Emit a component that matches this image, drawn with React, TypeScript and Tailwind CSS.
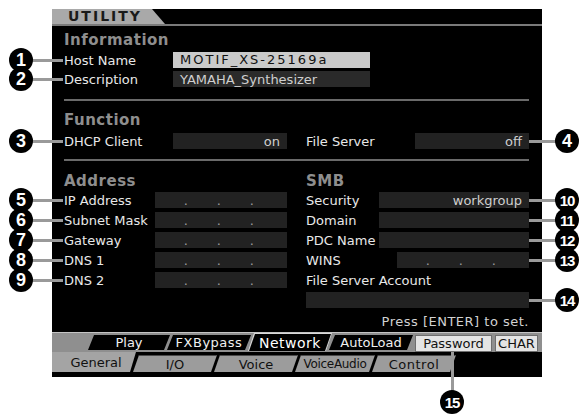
import React from "react";

type CalloutProps = { num: string; circle: string; line: string };

const Callout: React.FC<CalloutProps> = ({ num, circle, line }) => (
  <>
    <div className={`absolute bg-[#9a9a9a] ${line}`} />
    <div
      className={`absolute w-[24px] h-[24px] rounded-full bg-black text-white flex items-center justify-center font-['Liberation_Sans',sans-serif] font-bold leading-none ${
        num.length > 1 ? "text-[15px] tracking-[-1px]" : "text-[18px]"
      } ${circle}`}
    >
      {num}
    </div>
  </>
);

const Heading: React.FC<{ children: React.ReactNode }> = ({ children }) => (
  <div className="h-[18px] leading-[18px] text-[15px] font-bold tracking-[0.5px] text-[#8e8e8e]">{children}</div>
);

const Label: React.FC<{ w: string; children: React.ReactNode }> = ({ w, children }) => (
  <div className={`${w} shrink-0 text-[13px] leading-none text-[#e8e8e8]`}>{children}</div>
);

const ValueBox: React.FC<{ w: string; children?: React.ReactNode }> = ({ w, children }) => (
  <div className={`${w} h-full bg-[#222222] flex items-center justify-end pr-[7px] text-[13px] leading-none text-[#cfcfcf]`}>
    {children}
  </div>
);

const IpBox: React.FC<{ w: string }> = ({ w }) => (
  <div className={`${w} h-full bg-[#222222] grid grid-cols-4`}>
    {[0, 1, 2].map((i) => (
      <div key={i} className="flex items-center justify-end text-[13px] leading-none text-[#9c9c9c]">
        .
      </div>
    ))}
    <div />
  </div>
);

const Row: React.FC<{ children: React.ReactNode }> = ({ children }) => (
  <div className="h-[16px] flex items-center">{children}</div>
);

const App: React.FC = () => {
  return (
    <div className="relative w-[584px] h-[415px] bg-white overflow-hidden font-['DejaVu_Sans',sans-serif]">
      {/* LCD screen */}
      <div className="ml-[52px] mt-[9px] w-[490px] h-[368px] bg-black flex flex-col">
        <div className="h-[15px] flex">
          <div className="w-[113px] h-full bg-[#a9a9a9] [clip-path:polygon(0_0,100px_0,113px_100%,0_100%)] pl-[16px] text-[14px] leading-[15px] font-bold tracking-[2px] text-[#1a1a1a]">
            UTILITY
          </div>
        </div>
        <div className="h-[2px] bg-[#7a7a7a]" />

        <div className="pl-[12px] pr-[13px]">
          <div className="mt-[5px]">
            <Heading>Information</Heading>
          </div>
          <div className="mt-[3px]">
            <Row>
              <Label w="w-[109px]">Host Name</Label>
              <div className="w-[197px] h-full bg-[#cacaca] flex items-center pl-[7px] pb-[1px] text-[13px] leading-[15px] tracking-[2px] text-[#111111]">
                MOTIF_XS-25169a
              </div>
            </Row>
          </div>
          <div className="mt-[3px]">
            <Row>
              <Label w="w-[109px]">Description</Label>
              <div className="w-[197px] h-full bg-[#2a2a2a] flex items-center pl-[7px] text-[13px] leading-none text-[#cfcfcf]">
                YAMAHA_Synthesizer
              </div>
            </Row>
          </div>

          <div className="mt-[12px] h-[2px] bg-[#6a6a6a]" />

          <div className="mt-[10px]">
            <Heading>Function</Heading>
          </div>
          <div className="mt-[4px] grid grid-cols-[223px_223px] gap-x-[19px]">
            <Row>
              <Label w="w-[109px]">DHCP Client</Label>
              <ValueBox w="w-[114px]">on</ValueBox>
            </Row>
            <Row>
              <Label w="w-[109px]">File Server</Label>
              <ValueBox w="w-[114px]">off</ValueBox>
            </Row>
          </div>

          <div className="mt-[10px] h-[2px] bg-[#6a6a6a]" />

          <div className="mt-[11px] grid grid-cols-[223px_223px] gap-x-[19px]">
            <div className="flex flex-col">
              <Heading>Address</Heading>
              <div className="mt-[2px] flex flex-col gap-[4px]">
                {["IP Address", "Subnet Mask", "Gateway", "DNS 1", "DNS 2"].map((name) => (
                  <Row key={name}>
                    <Label w="w-[91px]">{name}</Label>
                    <IpBox w="w-[132px]" />
                  </Row>
                ))}
              </div>
            </div>
            <div className="flex flex-col">
              <Heading>SMB</Heading>
              <div className="mt-[2px] flex flex-col gap-[4px]">
                <Row>
                  <Label w="w-[73px]">Security</Label>
                  <ValueBox w="w-[150px]">workgroup</ValueBox>
                </Row>
                <Row>
                  <Label w="w-[73px]">Domain</Label>
                  <ValueBox w="w-[150px]" />
                </Row>
                <Row>
                  <Label w="w-[73px]">PDC Name</Label>
                  <ValueBox w="w-[150px]" />
                </Row>
                <Row>
                  <Label w="w-[91px]">WINS</Label>
                  <IpBox w="w-[132px]" />
                </Row>
                <Row>
                  <Label w="w-full">File Server Account</Label>
                </Row>
                <div className="h-[16px] bg-[#222222]" />
              </div>
            </div>
          </div>

          <div className="mt-[6px] h-[16px] text-right text-[13px] leading-[16px] tracking-[0.5px] text-[#d2d2d2]">
            Press [ENTER] to set.
          </div>
        </div>

        {/* tabs */}
        <div className="mt-auto mb-[5px] h-[40px] flex flex-col">
          <div className="h-[20px] bg-[#8f8f8f] border-t border-[#c4c4c4] flex items-end">
            <div className="w-[36px] shrink-0" />
            <div className="w-[82px] h-[15px] mb-[2px] bg-black [clip-path:polygon(6px_0,100%_0,calc(100%-6px)_100%,0_100%)] flex items-center justify-center text-[13px] leading-none text-[#f0f0f0]">
              Play
            </div>
            <div className="-ml-[3px] w-[84px] h-[15px] mb-[2px] bg-black [clip-path:polygon(6px_0,100%_0,calc(100%-6px)_100%,0_100%)] flex items-center justify-center text-[13px] leading-none tracking-[0.5px] text-[#f0f0f0]">
              FXBypass
            </div>
            <div className="-ml-[3px] w-[84px] h-[18px] mb-[1px] bg-[#d8d8d8] [clip-path:polygon(6px_0,100%_0,calc(100%-6px)_100%,0_100%)] pt-[1px] pl-[1px] pr-[1px]">
              <div className="w-full h-full bg-black [clip-path:polygon(6px_0,100%_0,calc(100%-6px)_100%,0_100%)] flex items-center justify-center text-[14px] leading-none tracking-[0.5px] text-white">
                Network
              </div>
            </div>
            <div className="-ml-[3px] w-[84px] h-[15px] mb-[2px] bg-black [clip-path:polygon(6px_0,100%_0,calc(100%-6px)_100%,0_100%)] flex items-center justify-center text-[13px] leading-none text-[#f0f0f0]">
              AutoLoad
            </div>
            <div className="ml-[2px] w-[77px] h-[17px] bg-[#e4e4e4] border border-[#6e6e6e] flex items-center justify-center text-[13px] leading-none text-[#111111]">
              Password
            </div>
            <div className="ml-[3px] w-[43px] h-[17px] bg-[#e4e4e4] border border-[#6e6e6e] flex items-center justify-center text-[13px] leading-none text-[#111111]">
              CHAR
            </div>
          </div>
          <div className="h-[20px] bg-black flex items-start">
            <div className="w-[84px] h-[20px] bg-[#a4a4a4] [clip-path:polygon(0_0,100%_0,calc(100%-6px)_100%,0_100%)] flex items-center justify-center pl-[4px] text-[13px] leading-none text-[#111111]">
              General
            </div>
            <div className="-ml-[3px] mt-[3px] w-[84px] h-[17px] bg-[#9c9c9c] border-t border-[#4a4a4a] [clip-path:polygon(6px_0,100%_0,calc(100%-6px)_100%,0_100%)] flex items-center justify-center text-[13px] leading-none text-[#111111]">
              I/O
            </div>
            <div className="-ml-[3px] mt-[3px] w-[84px] h-[17px] bg-[#9c9c9c] border-t border-[#4a4a4a] [clip-path:polygon(6px_0,100%_0,calc(100%-6px)_100%,0_100%)] flex items-center justify-center text-[13px] leading-none text-[#111111]">
              Voice
            </div>
            <div className="-ml-[3px] mt-[3px] w-[80px] h-[17px] bg-[#9c9c9c] border-t border-[#4a4a4a] [clip-path:polygon(6px_0,100%_0,calc(100%-6px)_100%,0_100%)] flex items-center justify-center text-[12px] leading-none tracking-[-0.3px] text-[#111111]">
              VoiceAudio
            </div>
            <div className="-ml-[3px] mt-[3px] w-[84px] h-[17px] bg-[#9c9c9c] border-t border-[#4a4a4a] [clip-path:polygon(6px_0,100%_0,calc(100%-6px)_100%,0_100%)] flex items-center justify-center text-[13px] leading-none tracking-[0.5px] text-[#111111]">
              Control
            </div>
          </div>
        </div>
      </div>

      {/* callouts */}
      <Callout num="1" circle="left-[9px] top-[48px]" line="left-[32px] top-[59px] w-[31px] h-[3px]" />
      <Callout num="2" circle="left-[9px] top-[67px]" line="left-[32px] top-[78px] w-[31px] h-[3px]" />
      <Callout num="3" circle="left-[9px] top-[129px]" line="left-[32px] top-[140px] w-[31px] h-[3px]" />
      <Callout num="5" circle="left-[9px] top-[188px]" line="left-[32px] top-[199px] w-[31px] h-[3px]" />
      <Callout num="6" circle="left-[9px] top-[208px]" line="left-[32px] top-[219px] w-[31px] h-[3px]" />
      <Callout num="7" circle="left-[9px] top-[228px]" line="left-[32px] top-[239px] w-[31px] h-[3px]" />
      <Callout num="8" circle="left-[9px] top-[248px]" line="left-[32px] top-[259px] w-[31px] h-[3px]" />
      <Callout num="9" circle="left-[9px] top-[268px]" line="left-[32px] top-[279px] w-[31px] h-[3px]" />
      <Callout num="4" circle="left-[555px] top-[129px]" line="left-[529px] top-[140px] w-[28px] h-[3px]" />
      <Callout num="10" circle="left-[555px] top-[188px]" line="left-[529px] top-[199px] w-[28px] h-[3px]" />
      <Callout num="11" circle="left-[555px] top-[208px]" line="left-[529px] top-[219px] w-[28px] h-[3px]" />
      <Callout num="12" circle="left-[555px] top-[228px]" line="left-[529px] top-[239px] w-[28px] h-[3px]" />
      <Callout num="13" circle="left-[555px] top-[248px]" line="left-[529px] top-[259px] w-[28px] h-[3px]" />
      <Callout num="14" circle="left-[555px] top-[288px]" line="left-[529px] top-[299px] w-[28px] h-[3px]" />
      <Callout num="15" circle="left-[440px] top-[390px]" line="left-[451px] top-[352px] w-[3px] h-[40px]" />
    </div>
  );
};

export default App;
